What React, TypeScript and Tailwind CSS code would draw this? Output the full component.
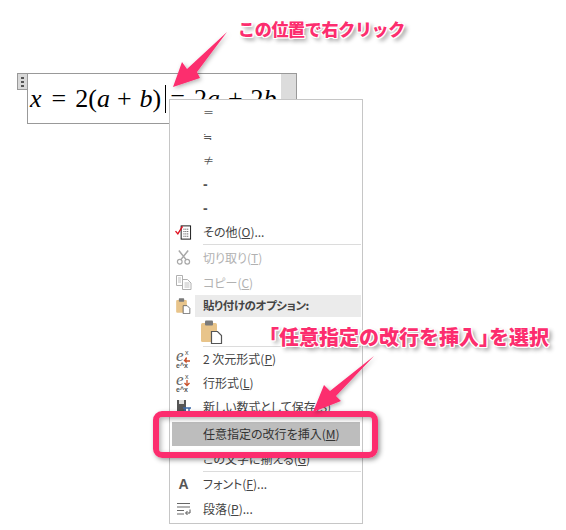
import type { ReactNode } from 'react';

const jp = "font-['Noto_Sans_CJK_JP','Noto_Sans',sans-serif]";
const outline =
  '[text-shadow:-1px_-1px_0_#fff,1px_-1px_0_#fff,-1px_1px_0_#fff,1px_1px_0_#fff,0_-1px_0_#fff,0_1px_0_#fff,-1px_0_0_#fff,1px_0_0_#fff,3px_3px_4px_rgba(0,0,0,0.45)]';

function Clipboard({ large }: { large?: boolean }) {
  return (
    <svg width={large ? 22 : 15} height={large ? 24 : 16} viewBox="0 0 22 24">
      <rect x="0" y="3" width="16" height="19" rx="1.5" fill="#e8c48a" />
      <rect x="4" y="0.5" width="8" height="5" rx="1" fill="#7a7a7a" />
      <path d="M10.5 11.5h6l4 4v8h-10z" fill="#fff" stroke="#555" strokeWidth="1.2" />
    </svg>
  );
}

function MathIcon({ color, down }: { color: string; down?: boolean }) {
  return (
    <svg width="18" height="24" viewBox="0 -2 18 24">
      <text x="1" y="12" fontFamily="Liberation Serif" fontStyle="italic" fontSize="17" fill="#666">e</text>
      <text x="10" y="6" fontFamily="Liberation Sans" fontSize="7" fill="#555">x</text>
      <text x="1" y="19" fontFamily="Liberation Sans" fontSize="7" fontWeight="700" fill="#555">e^x</text>
      <path
        d={down ? 'M12 7v5M9.500 10l2.500 2.500 2.500-2.500' : 'M15 12h-4c-1 0-1-3 1-3M9 11l2 2 0-3'}
        fill="none"
        stroke={color}
        strokeWidth="1.300"
      />
    </svg>
  );
}

const icons: Record<string, ReactNode> = {
  more: (
    <svg width="17" height="17" viewBox="0 0 18 17">
      <rect x="6.500" y="1.500" width="10" height="14" fill="#fff" stroke="#111" />
      <path d="M9 5h6M9 7.500h6M9 10h6M9 12.500h6" stroke="#333" strokeDasharray="1 1" />
      <path d="M0.500 7l2.500 3 5-8" fill="none" stroke="#e01020" strokeWidth="1.500" />
    </svg>
  ),
  cut: (
    <svg width="15" height="17" viewBox="0 0 16 17">
      <path d="M3 1l8 10M13 1L5 11" stroke="#a8a8a8" strokeWidth="1.600" />
      <circle cx="4" cy="13" r="2.500" fill="none" stroke="#a8a8a8" strokeWidth="1.300" />
      <circle cx="12" cy="13" r="2.500" fill="none" stroke="#a8a8a8" strokeWidth="1.300" />
    </svg>
  ),
  copy: (
    <svg width="16" height="15" viewBox="0 0 16 15">
      <path d="M0.500 0.500h6v10h-6zM6.500 4.500h5l3.500 3.500v6.500h-8.500z" fill="#fff" stroke="#b0b0b0" />
      <path d="M2 3h3M2 5h3M2 7h3M8.500 8h5M8.500 10h5M8.500 12h5" stroke="#c0c0c0" />
    </svg>
  ),
  paste: <Clipboard />,
  matrix: <MathIcon color="#c8502a" />,
  linear: <MathIcon color="#c8502a" down />,
  save: (
    <svg width="14" height="14" viewBox="0 0 14 14">
      <rect x="0" y="0" width="9" height="11" fill="#555" />
      <rect x="2" y="0" width="5" height="4" fill="#ddd" />
      <path d="M6 8h8M8 8v6M12 8v6" stroke="#3a68a8" strokeWidth="1.400" />
    </svg>
  ),
  font: <span className="text-[14px] leading-none font-bold text-[#555] font-['Liberation_Sans',sans-serif]">A</span>,
  para: (
    <svg width="15" height="14" viewBox="0 0 15 14">
      <path d="M1 1.500h13M1 5h13M1 8.500h7M1 12h7" stroke="#666" />
      <path d="M14 7.500v3.500h-4M11.500 9l-2 2 2 2" fill="none" stroke="#555" />
    </svg>
  ),
};

type Row = {
  label: string;
  accel: string;
  tail: string;
  icon?: string;
  h: string;
  disabled?: boolean;
};

function Item({ label, accel, tail, icon, h, disabled }: Row) {
  return (
    <div className={`flex items-center ${h}`}>
      <div className="flex w-[33px] shrink-0 justify-center pr-[6px]">{icon && icons[icon]}</div>
      <span className={`whitespace-nowrap text-[12px] leading-none ${disabled ? 'text-[#b1b1b1]' : 'text-[#444]'}`}>
        {label}
        <span className="underline">{accel}</span>
        {tail}
      </span>
    </div>
  );
}

function Symbol({ children, className = '' }: { children: ReactNode; className?: string }) {
  return (
    <div className={`flex h-[24px] items-center pl-[33px] text-[11px] leading-none text-[#555] ${className}`}>
      {children}
    </div>
  );
}

const Sep = () => <div className="ml-[33px] mr-[1px] h-[1px] bg-[#dcdcdc]" />;

export default function App() {
  return (
    <div className={`relative h-[530px] w-[566px] overflow-hidden bg-white pl-[17px] pt-[73px] ${jp}`}>
      {/* equation box */}
      <div className="flex h-[51px] w-[280px]">
        <div className="flex h-[17px] w-[10px] flex-col items-center justify-center gap-[2px] border border-r-0 border-[#999] bg-[#d9d9d9]">
          <i className="h-[2px] w-[3px] bg-[#555]" />
          <i className="h-[2px] w-[3px] bg-[#555]" />
          <i className="h-[2px] w-[3px] bg-[#555]" />
        </div>
        <div className="flex flex-1 border border-[#999] bg-white">
          <div className="flex h-full w-[253px] items-center overflow-hidden whitespace-nowrap pl-[2px] font-['Liberation_Serif',serif] text-[26px] leading-none text-black">
            <i>x</i>
            <span className="ml-[10px]">=</span>
            <span className="ml-[9px]">2(</span>
            <i>a</i>
            <span className="ml-[7px]">+</span>
            <i className="ml-[8px]">b</i>
            <span>)</span>
            <span className="ml-[4px] h-[28px] w-[1px] bg-black" />
            <span className="ml-[4px]">=</span>
            <span className="ml-[9px]">2</span>
            <i>a</i>
            <span className="mx-[8px]">+</span>
            <span>2</span>
            <i>b</i>
          </div>
          <div className="flex-1 bg-[#dcdcdc]" />
        </div>
      </div>

      {/* context menu */}
      <div className="relative ml-[152px] mt-[-25px] h-[425px] w-[194px] border border-[#c6c6c6] bg-white [font-feature-settings:'palt']">
        <Symbol>＝</Symbol>
        <Symbol>≒</Symbol>
        <Symbol>≠</Symbol>
        <Symbol className="font-['Liberation_Sans',sans-serif] text-[14px] font-bold">-</Symbol>
        <Symbol className="font-['Liberation_Sans',sans-serif] text-[14px] font-bold">-</Symbol>
        <Item icon="more" label="その他(" accel="O" tail=")..." h="h-[24px]" />
        <Sep />
        <Item icon="cut" label="切り取り(" accel="T" tail=")" h="h-[25px]" disabled />
        <Item icon="copy" label="コピー(" accel="C" tail=")" h="h-[25px]" disabled />
        <div className="flex h-[22px] items-center">
          <div className="flex w-[25px] shrink-0 justify-center pl-[1px]">{icons.paste}</div>
          <div className="mr-[1px] flex h-full flex-1 items-center bg-[#ebebeb] pl-[8px] text-[11.5px] font-bold tracking-[-0.4px] leading-none text-[#444]">
            貼り付けのオプション:
          </div>
        </div>
        <div className="flex h-[29px] items-center pl-[31px]">
          <Clipboard large />
        </div>
        <Sep />
        <Item icon="matrix" label="2 次元形式(" accel="P" tail=")" h="h-[24px]" />
        <Item icon="linear" label="行形式(" accel="L" tail=")" h="h-[24px]" />
        <Item icon="save" label="新しい数式として保存(" accel="S" tail=")" h="h-[24px]" />
        <div className="h-[2px]" />
        <div className="mx-[1px] border border-white bg-[#bdbdbd]">
          <div className="flex h-[24px] items-center pl-[31px] text-[12px] leading-none text-[#333]">
            任意指定の改行を挿入(<span className="underline">M</span>)
          </div>
        </div>
        <Item label="この文字に揃える(" accel="G" tail=")" h="h-[24px]" />
        <Sep />
        <Item icon="font" label="フォント(" accel="F" tail=")..." h="h-[24px]" />
        <Item icon="para" label="段落(" accel="P" tail=")..." h="h-[25px]" />
      </div>

      {/* annotations over the screenshot */}
      <div className="absolute left-[153px] top-[411px] h-[47px] w-[225px] rounded-[9px] border-[6px] border-[#fc2d6e] shadow-[2px_2px_5px_rgba(0,0,0,0.4),inset_2px_2px_5px_rgba(0,0,0,0.3)]" />
      <svg className="absolute left-0 top-0" width="566" height="530" viewBox="0 0 566 530">
        <defs>
          <filter id="soft" x="-20%" y="-20%" width="150%" height="150%">
            <feDropShadow dx="1.500" dy="1.500" stdDeviation="2" floodColor="#000" floodOpacity="0.3" />
          </filter>
        </defs>
        <polygon points="173,87 182,62 187,69 227,32 197,72 200,78" fill="#fc2d6e" filter="url(#soft)" />
        <polygon points="313,412 324,385 330,391 374,356 336,396 341,401" fill="#fc2d6e" filter="url(#soft)" />
      </svg>
      <div className={`absolute left-[238px] top-[16px] whitespace-nowrap text-[17px] font-black tracking-[-0.3px] leading-[26px] text-[#fc2d6e] ${outline}`}>
        この位置で右クリック
      </div>
      <div className={`absolute left-[259px] top-[323px] whitespace-nowrap text-[20px] font-black leading-[28px] text-[#fc2d6e] [text-spacing-trim:space-all] ${outline}`}>
        「任意指定の改行を挿入<span className="tracking-[-10px]">」</span>を選択
      </div>
    </div>
  );
}
